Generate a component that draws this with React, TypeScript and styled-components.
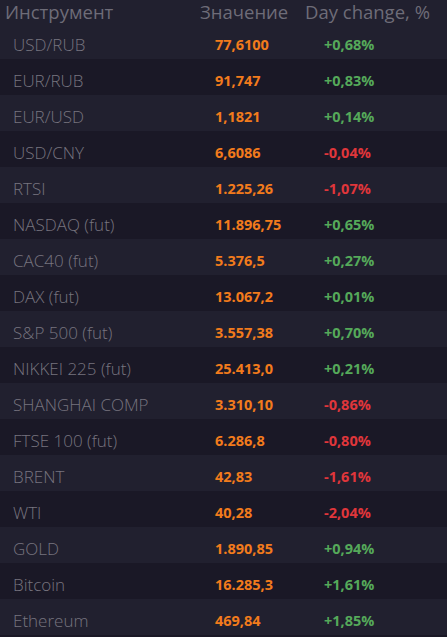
import styled, { createGlobalStyle } from "styled-components";

const GlobalStyle = createGlobalStyle`
  html, body {
    margin: 0;
    padding: 0;
    background: #1a1826;
  }
`;

type Quote = { name: string; value: string; change: string };

const quotes: Quote[] = [
  { name: "USD/RUB", value: "77,6100", change: "+0,68%" },
  { name: "EUR/RUB", value: "91,747", change: "+0,83%" },
  { name: "EUR/USD", value: "1,1821", change: "+0,14%" },
  { name: "USD/CNY", value: "6,6086", change: "-0,04%" },
  { name: "RTSI", value: "1.225,26", change: "-1,07%" },
  { name: "NASDAQ (fut)", value: "11.896,75", change: "+0,65%" },
  { name: "CAC40 (fut)", value: "5.376,5", change: "+0,27%" },
  { name: "DAX (fut)", value: "13.067,2", change: "+0,01%" },
  { name: "S&P 500 (fut)", value: "3.557,38", change: "+0,70%" },
  { name: "NIKKEI 225 (fut)", value: "25.413,0", change: "+0,21%" },
  { name: "SHANGHAI COMP", value: "3.310,10", change: "-0,86%" },
  { name: "FTSE 100 (fut)", value: "6.286,8", change: "-0,80%" },
  { name: "BRENT", value: "42,83", change: "-1,61%" },
  { name: "WTI", value: "40,28", change: "-2,04%" },
  { name: "GOLD", value: "1.890,85", change: "+0,94%" },
  { name: "Bitcoin", value: "16.285,3", change: "+1,61%" },
  { name: "Ethereum", value: "469,84", change: "+1,85%" },
];

const Table = styled.div`
  width: 447px;
  height: 637px;
  background: #1a1826;
  overflow: hidden;
`;

const HeaderRow = styled.div`
  display: grid;
  grid-template-columns: 200px 105px 1fr;
  height: 23px;
  align-items: center;
  background: #21202f;
  font-family: "Open Sans", "DejaVu Sans", sans-serif;
  font-size: 18.5px;
  color: #6e6c78;
  white-space: nowrap;
`;

const HeaderCell = styled.div<{ $pad?: number }>`
  padding-left: ${(p) => p.$pad ?? 0}px;
  line-height: 23px;
`;

const Row = styled.div<{ $dark: boolean }>`
  display: grid;
  grid-template-columns: 200px 105px 1fr;
  box-sizing: border-box;
  height: 36px;
  padding-top: 6px;
  align-items: center;
  background: ${(p) => (p.$dark ? "#1a1826" : "#21202f")};
  white-space: nowrap;
`;

const Name = styled.div`
  padding-left: 13px;
  font-family: "Open Sans", "Liberation Sans", sans-serif;
  font-weight: 300;
  font-size: 17px;
  color: #77747f;
`;

const Value = styled.div`
  padding-left: 15px;
  font-family: "Open Sans", "Liberation Sans", sans-serif;
  font-weight: 700;
  font-size: 14.5px;
  color: #f27b1c;
`;

const Change = styled.div<{ $up: boolean }>`
  padding-left: 19px;
  font-family: "Open Sans", "Liberation Sans", sans-serif;
  font-weight: 700;
  font-size: 14.5px;
  color: ${(p) => (p.$up ? "#55a95a" : "#e0363b")};
`;

export default function App() {
  return (
    <>
      <GlobalStyle />
      <Table>
        <HeaderRow>
          <HeaderCell $pad={5}>Инструмент</HeaderCell>
          <HeaderCell>Значение</HeaderCell>
          <HeaderCell>Day change, %</HeaderCell>
        </HeaderRow>
        {quotes.map((q, i) => (
          <Row key={q.name} $dark={i % 2 === 1}>
            <Name>{q.name}</Name>
            <Value>{q.value}</Value>
            <Change $up={!q.change.startsWith("-")}>{q.change}</Change>
          </Row>
        ))}
      </Table>
    </>
  );
}
